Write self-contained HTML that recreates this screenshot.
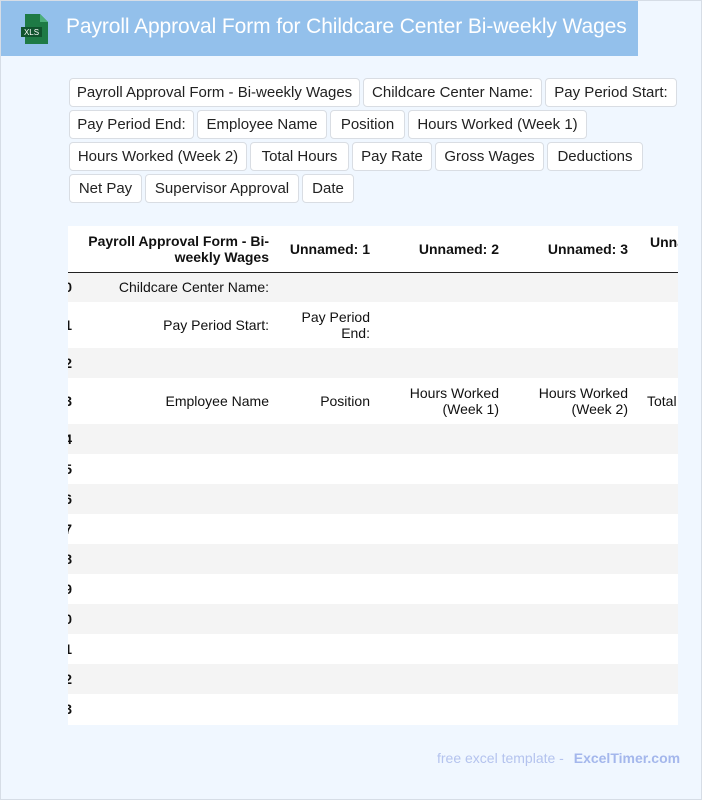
<!DOCTYPE html>
<html><head><meta charset="utf-8"><style>
*{box-sizing:border-box;margin:0;padding:0}
html,body{width:702px;height:800px;overflow:hidden}
body{background:#f0f7ff;font-family:"Liberation Sans",Arial,sans-serif;position:relative}
.bd{position:absolute;left:0;top:0;width:702px;height:800px;border:1px solid #d6dde6;pointer-events:none}
.hdr{position:absolute;left:0;top:0;width:638px;height:56px;background:#93c0eb}
.hdr h1{position:absolute;left:66px;top:15px;font-size:21px;font-weight:normal;color:#fff;white-space:nowrap;letter-spacing:-0.1px}
.chip{position:absolute;height:29px;background:#fff;border:1px solid #d9dde3;border-radius:4px;font-size:15px;color:#222;line-height:27px;text-align:center;white-space:nowrap;overflow:hidden}
.tw{position:absolute;left:68px;top:226px;width:610px;height:499px;overflow:hidden;background:#fff}
table{position:absolute;left:-12px;top:0;border-collapse:collapse;font-size:14px;color:#111;table-layout:fixed;width:760px}
td,th{padding:0 10px 0 6px;text-align:right;vertical-align:middle;line-height:16px}
th{font-weight:bold;height:46px;border-bottom:1.5px solid #222}
td.i{font-weight:bold;padding:0 6px 0 0}
tr.s td{height:30px}
tr.t td{height:46px}
tbody tr:nth-child(odd){background:#f4f4f4}
.ft{position:absolute;top:750px;left:437px;font-size:14px;color:#b4c3ee;white-space:nowrap}
.ft b{color:#a4b7ec;margin-left:6px}
</style></head><body>
<div class="hdr">
<svg style="position:absolute;left:20px;top:13px" width="32" height="32" viewBox="0 0 32 32">
<path d="M5 1h15l8 8v22H5z" fill="#1e7a45"/><path d="M20 1v8h8z" fill="#4caf7a"/>
<rect x="1" y="14" width="21" height="10" fill="#10532d"/>
<text x="11.5" y="22" font-size="8" fill="#fff" text-anchor="middle" font-family="Liberation Sans">XLS</text></svg>
<h1>Payroll Approval Form for Childcare Center Bi-weekly Wages</h1></div>

<div class="chip" style="left:69px;top:78px;width:291px">Payroll Approval Form - Bi-weekly Wages</div>
<div class="chip" style="left:363px;top:78px;width:179px">Childcare Center Name:</div>
<div class="chip" style="left:545px;top:78px;width:132px">Pay Period Start:</div>
<div class="chip" style="left:69px;top:110px;width:125px">Pay Period End:</div>
<div class="chip" style="left:197px;top:110px;width:130px">Employee Name</div>
<div class="chip" style="left:330px;top:110px;width:75px">Position</div>
<div class="chip" style="left:408px;top:110px;width:179px">Hours Worked (Week 1)</div>
<div class="chip" style="left:69px;top:142px;width:178px">Hours Worked (Week 2)</div>
<div class="chip" style="left:250px;top:142px;width:99px">Total Hours</div>
<div class="chip" style="left:352px;top:142px;width:80px">Pay Rate</div>
<div class="chip" style="left:435px;top:142px;width:109px">Gross Wages</div>
<div class="chip" style="left:547px;top:142px;width:96px">Deductions</div>
<div class="chip" style="left:69px;top:174px;width:73px">Net Pay</div>
<div class="chip" style="left:145px;top:174px;width:154px">Supervisor Approval</div>
<div class="chip" style="left:302px;top:174px;width:52px">Date</div>

<div class="tw"><table>
<colgroup><col style="width:22px"><col style="width:201px"><col style="width:101px"><col style="width:129px"><col style="width:129px"><col style="width:178px"></colgroup>
<thead><tr><th></th><th>Payroll Approval Form - Bi-weekly Wages</th><th>Unnamed: 1</th><th>Unnamed: 2</th><th>Unnamed: 3</th><th style="text-align:left;vertical-align:top;padding-top:8px;padding-left:12px">Unnamed: 4</th></tr></thead>
<tbody>
<tr class="s"><td class="i">0</td><td>Childcare Center Name:</td><td></td><td></td><td></td><td></td></tr>
<tr class="t"><td class="i">1</td><td>Pay Period Start:</td><td>Pay Period End:</td><td></td><td></td><td></td></tr>
<tr class="s"><td class="i">2</td><td></td><td></td><td></td><td></td><td></td></tr>
<tr class="t"><td class="i">3</td><td>Employee Name</td><td>Position</td><td>Hours Worked (Week 1)</td><td>Hours Worked (Week 2)</td><td style="text-align:left;padding-left:9px">Total Hours</td></tr>
<tr class="s"><td class="i">4</td><td></td><td></td><td></td><td></td><td></td></tr>
<tr class="s"><td class="i">5</td><td></td><td></td><td></td><td></td><td></td></tr>
<tr class="s"><td class="i">6</td><td></td><td></td><td></td><td></td><td></td></tr>
<tr class="s"><td class="i">7</td><td></td><td></td><td></td><td></td><td></td></tr>
<tr class="s"><td class="i">8</td><td></td><td></td><td></td><td></td><td></td></tr>
<tr class="s"><td class="i">9</td><td></td><td></td><td></td><td></td><td></td></tr>
<tr class="s"><td class="i">10</td><td></td><td></td><td></td><td></td><td></td></tr>
<tr class="s"><td class="i">11</td><td></td><td></td><td></td><td></td><td></td></tr>
<tr class="s"><td class="i">12</td><td></td><td></td><td></td><td></td><td></td></tr>
<tr class="s"><td class="i">13</td><td></td><td></td><td></td><td></td><td></td></tr>
</tbody></table></div>

<div class="ft">free excel template - <b>ExcelTimer.com</b></div>
<div class="bd"></div>
</body></html>
